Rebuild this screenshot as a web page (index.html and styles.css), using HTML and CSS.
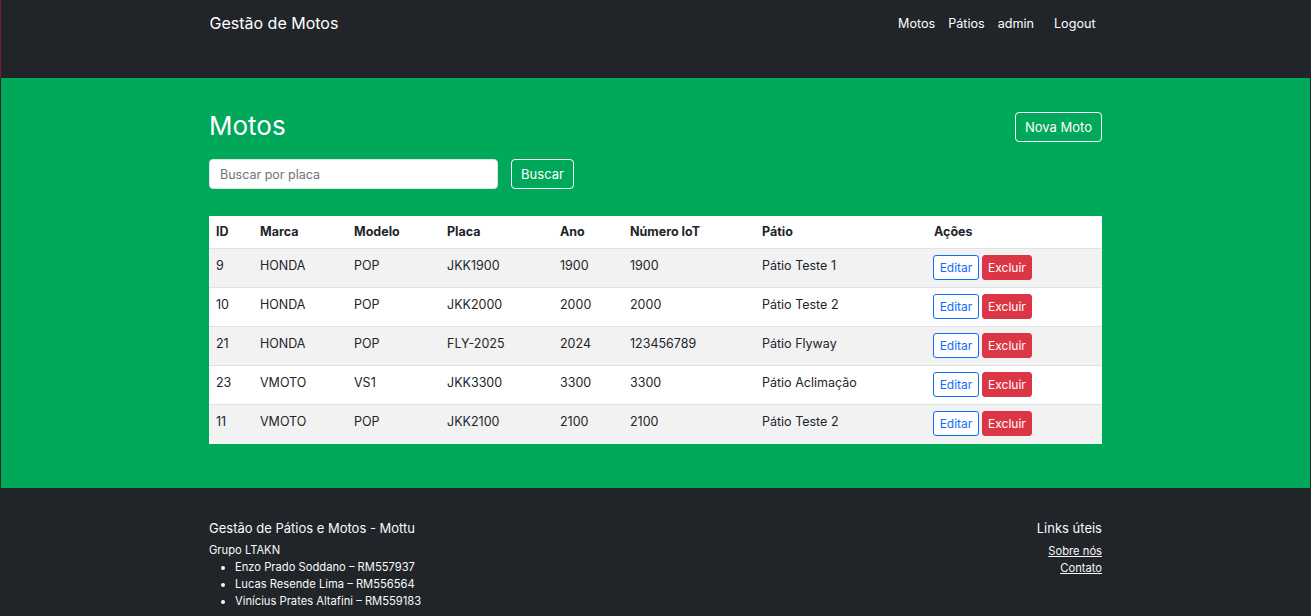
FILE: index.html
```html
<!DOCTYPE html>
<html lang="pt-BR">
<head>
<meta charset="utf-8">
<title>Gestão de Motos</title>
<link rel="stylesheet" href="styles.css">
</head>
<body>
<header class="topbar">
  <div class="wrap nav-inner">
    <a class="brand" href="#">Gestão de Motos</a>
    <nav class="nav-links">
      <a class="nav-link" href="#">Motos</a>
      <a class="nav-link" href="#">Pátios</a>
      <span class="nav-user">admin</span>
      <button class="nav-logout" type="button">Logout</button>
    </nav>
  </div>
</header>
<main class="hero">
  <div class="wrap">
    <div class="title-row">
      <h1 class="page-title">Motos</h1>
      <a class="btn btn-outline-light btn-new" href="#">Nova Moto</a>
    </div>
    <form class="search-row">
      <input class="search-input" type="text" placeholder="Buscar por placa">
      <button class="btn btn-outline-light btn-search" type="button">Buscar</button>
    </form>
    <table class="data-table">
      <colgroup>
        <col class="c-id"><col class="c-marca"><col class="c-modelo"><col class="c-placa"><col class="c-ano"><col class="c-iot"><col class="c-patio"><col class="c-acoes">
      </colgroup>
      <thead>
        <tr><th>ID</th><th>Marca</th><th>Modelo</th><th>Placa</th><th>Ano</th><th>Número IoT</th><th>Pátio</th><th>Ações</th></tr>
      </thead>
      <tbody>
        <tr><td>9</td><td>HONDA</td><td>POP</td><td>JKK1900</td><td>1900</td><td>1900</td><td>Pátio Teste 1</td><td class="acts"><a class="btn-sm btn-edit" href="#">Editar</a><a class="btn-sm btn-del" href="#">Excluir</a></td></tr>
        <tr><td>10</td><td>HONDA</td><td>POP</td><td>JKK2000</td><td>2000</td><td>2000</td><td>Pátio Teste 2</td><td class="acts"><a class="btn-sm btn-edit" href="#">Editar</a><a class="btn-sm btn-del" href="#">Excluir</a></td></tr>
        <tr><td>21</td><td>HONDA</td><td>POP</td><td>FLY-2025</td><td>2024</td><td>123456789</td><td>Pátio Flyway</td><td class="acts"><a class="btn-sm btn-edit" href="#">Editar</a><a class="btn-sm btn-del" href="#">Excluir</a></td></tr>
        <tr><td>23</td><td>VMOTO</td><td>VS1</td><td>JKK3300</td><td>3300</td><td>3300</td><td>Pátio Aclimação</td><td class="acts"><a class="btn-sm btn-edit" href="#">Editar</a><a class="btn-sm btn-del" href="#">Excluir</a></td></tr>
        <tr><td>11</td><td>VMOTO</td><td>POP</td><td>JKK2100</td><td>2100</td><td>2100</td><td>Pátio Teste 2</td><td class="acts"><a class="btn-sm btn-edit" href="#">Editar</a><a class="btn-sm btn-del" href="#">Excluir</a></td></tr>
      </tbody>
    </table>
  </div>
</main>
<footer class="footer">
  <div class="wrap footer-inner">
    <div class="footer-left">
      <h5 class="footer-title">Gestão de Pátios e Motos - Mottu</h5>
      <p class="footer-group">Grupo LTAKN</p>
      <ul class="footer-list">
        <li>Enzo Prado Soddano – RM557937</li>
        <li>Lucas Resende Lima – RM556564</li>
        <li>Vinícius Prates Altafini – RM559183</li>
      </ul>
    </div>
    <div class="footer-right">
      <h5 class="footer-title footer-title-right">Links úteis</h5>
      <a class="footer-link" href="#">Sobre nós</a>
      <a class="footer-link" href="#">Contato</a>
    </div>
  </div>
</footer>
</body>
</html>
```
FILE: styles.css
```css
* { box-sizing: border-box; }
html, body { margin: 0; padding: 0; }
body {
  background: #212529;
  font-family: Inter, "Noto Sans", Arial, sans-serif;
  color: #212529;
  font-size: 14px;
}
.wrap { width: 893px; margin: 0 auto; }

.topbar {
  height: 78px;
  border-left: 1px solid #7c1d33;
}
.nav-inner {
  display: flex;
  justify-content: space-between;
  align-items: flex-start;
  padding-top: 12px;
}
.brand {
  color: #fff;
  text-decoration: none;
  font-size: 16px;
  line-height: 22px;
}
.nav-links {
  display: flex;
  align-items: center;
  margin-top: 1px;
}
.nav-link, .nav-user {
  color: #fff;
  text-decoration: none;
  font-size: 12.6px;
  line-height: 22px;
  margin-right: 13px;
}
.nav-user { margin-right: 12px; }
.nav-logout {
  background: none;
  border: none;
  color: #fff;
  font-family: inherit;
  font-size: 12.6px;
  line-height: 22px;
  padding: 0 7px 0 8px;
}

.hero {
  background: #00a859;
  margin: 0 1px;
  padding: 31px 0 44px;
}
.title-row {
  display: flex;
  justify-content: space-between;
  align-items: center;
  height: 34px;
  margin-bottom: 16px;
}
.page-title {
  margin: 0;
  color: #fff;
  font-weight: 400;
  font-size: 26px;
  line-height: 34px;
}
.btn {
  display: inline-flex;
  align-items: center;
  justify-content: center;
  height: 30px;
  border-radius: 4px;
  font-family: inherit;
  font-size: 13px;
  text-decoration: none;
}
.btn-outline-light {
  border: 1px solid #fff;
  color: #fff;
  background: transparent;
}
.btn-new { width: 87px; margin-top: 2px; }
.search-row {
  display: flex;
  gap: 13px;
  margin: 0 0 27px;
}
.search-input {
  width: 289px;
  height: 30px;
  border: 1px solid #dee2e6;
  border-radius: 4px;
  padding: 0 10px;
  font-family: inherit;
  font-size: 12.5px;
  color: #212529;
}
.search-input::placeholder { color: #6c757d; }
.btn-search { width: 63px; }

.data-table {
  width: 893px;
  border-collapse: collapse;
  background: #fff;
  table-layout: fixed;
  font-size: 12.5px;
}
.c-id { width: 44px; }
.c-marca { width: 94px; }
.c-modelo { width: 93px; }
.c-placa { width: 113px; }
.c-ano { width: 70px; }
.c-iot { width: 132px; }
.c-patio { width: 172px; }
.c-acoes { width: 175px; }
.data-table th {
  text-align: left;
  font-weight: 700;
  padding: 7px 7px;
  line-height: 18px;
  height: 32px;
  border-bottom: 1px solid #dee2e6;
}
.data-table td {
  padding: 8px 7px;
  line-height: 18px;
  height: 39px;
  vertical-align: top;
  border-bottom: 1px solid #dee2e6;
}
.data-table tbody tr:nth-child(odd) td { background: #f2f2f2; }
.data-table tbody tr:last-child td { border-bottom: none; }
.data-table td.acts { padding: 6px 6px; }
.btn-sm {
  display: inline-flex;
  align-items: center;
  justify-content: center;
  height: 25px;
  border-radius: 3px;
  font-size: 12px;
  text-decoration: none;
  vertical-align: top;
}
.btn-edit {
  width: 46px;
  border: 1px solid #0d6efd;
  color: #0d6efd;
  background: #fff;
  margin-right: 3px;
}
.btn-del {
  width: 50px;
  background: #dc3545;
  color: #fff;
  border: 1px solid #dc3545;
}

.footer {
  color: #f8f9fa;
  padding: 31px 0 10px;
}
.footer-inner {
  display: flex;
  justify-content: space-between;
}
.footer-title {
  margin: 0 0 5px;
  font-weight: 400;
  font-size: 13px;
  line-height: 18px;
}
.footer-title-right { margin-bottom: 6px; }
.footer-group {
  margin: 0;
  font-size: 11.2px;
  line-height: 17px;
}
.footer-list {
  margin: 0;
  padding-left: 26px;
  font-size: 11.2px;
  line-height: 17px;
}
.footer-right {
  display: flex;
  flex-direction: column;
  align-items: flex-end;
}
.footer-link {
  color: #f8f9fa;
  font-size: 11.2px;
  line-height: 17px;
  text-decoration: underline;
}
```
